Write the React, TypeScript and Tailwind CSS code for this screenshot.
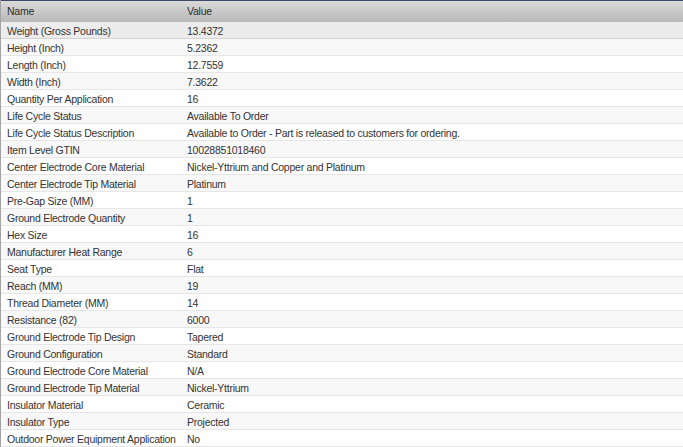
const rows: [string, string][] = [
  ["Weight (Gross Pounds)", "13.4372"],
  ["Height (Inch)", "5.2362"],
  ["Length (Inch)", "12.7559"],
  ["Width (Inch)", "7.3622"],
  ["Quantity Per Application", "16"],
  ["Life Cycle Status", "Available To Order"],
  ["Life Cycle Status Description", "Available to Order - Part is released to customers for ordering."],
  ["Item Level GTIN", "10028851018460"],
  ["Center Electrode Core Material", "Nickel-Yttrium and Copper and Platinum"],
  ["Center Electrode Tip Material", "Platinum"],
  ["Pre-Gap Size (MM)", "1"],
  ["Ground Electrode Quantity", "1"],
  ["Hex Size", "16"],
  ["Manufacturer Heat Range", "6"],
  ["Seat Type", "Flat"],
  ["Reach (MM)", "19"],
  ["Thread Diameter (MM)", "14"],
  ["Resistance (82)", "6000"],
  ["Ground Electrode Tip Design", "Tapered"],
  ["Ground Configuration", "Standard"],
  ["Ground Electrode Core Material", "N/A"],
  ["Ground Electrode Tip Material", "Nickel-Yttrium"],
  ["Insulator Material", "Ceramic"],
  ["Insulator Type", "Projected"],
  ["Outdoor Power Equipment Application", "No"],
];

const App = () => {
  return (
    <div
      className="h-[447px] w-full overflow-hidden border-l border-[#a3a3a3] bg-white text-[10.5px] tracking-[-0.25px] text-[#333333]"
      style={{ fontFamily: '"Liberation Sans", Arial, sans-serif' }}
    >
      <div className="grid h-[22px] grid-cols-[180px_1fr] items-center border-t border-[#3d4b6d] bg-gradient-to-b from-[#dadada] to-[#b8b8b8] pt-[1px] text-[#2e2e2e]">
        <div className="pl-[6px]">Name</div>
        <div className="pl-[6px]">Value</div>
      </div>
      {rows.map(([name, value], i) => (
        <div
          key={name}
          className={
            i === 0
              ? "grid h-[17px] grid-cols-[180px_1fr] items-center border-b border-[#d4d4d4] bg-[#ececec] pt-[2px]"
              : i % 2 === 1
                ? "grid h-[17px] grid-cols-[180px_1fr] items-center border-b border-[#e6e6e6] bg-[#f8f8f8] pt-[2px]"
                : "grid h-[17px] grid-cols-[180px_1fr] items-center border-b border-[#e6e6e6] bg-white pt-[2px]"
          }
        >
          <div className="whitespace-nowrap pl-[6px]">{name}</div>
          <div className="whitespace-nowrap pl-[6px]">{value}</div>
        </div>
      ))}
    </div>
  );
};

export default App;
